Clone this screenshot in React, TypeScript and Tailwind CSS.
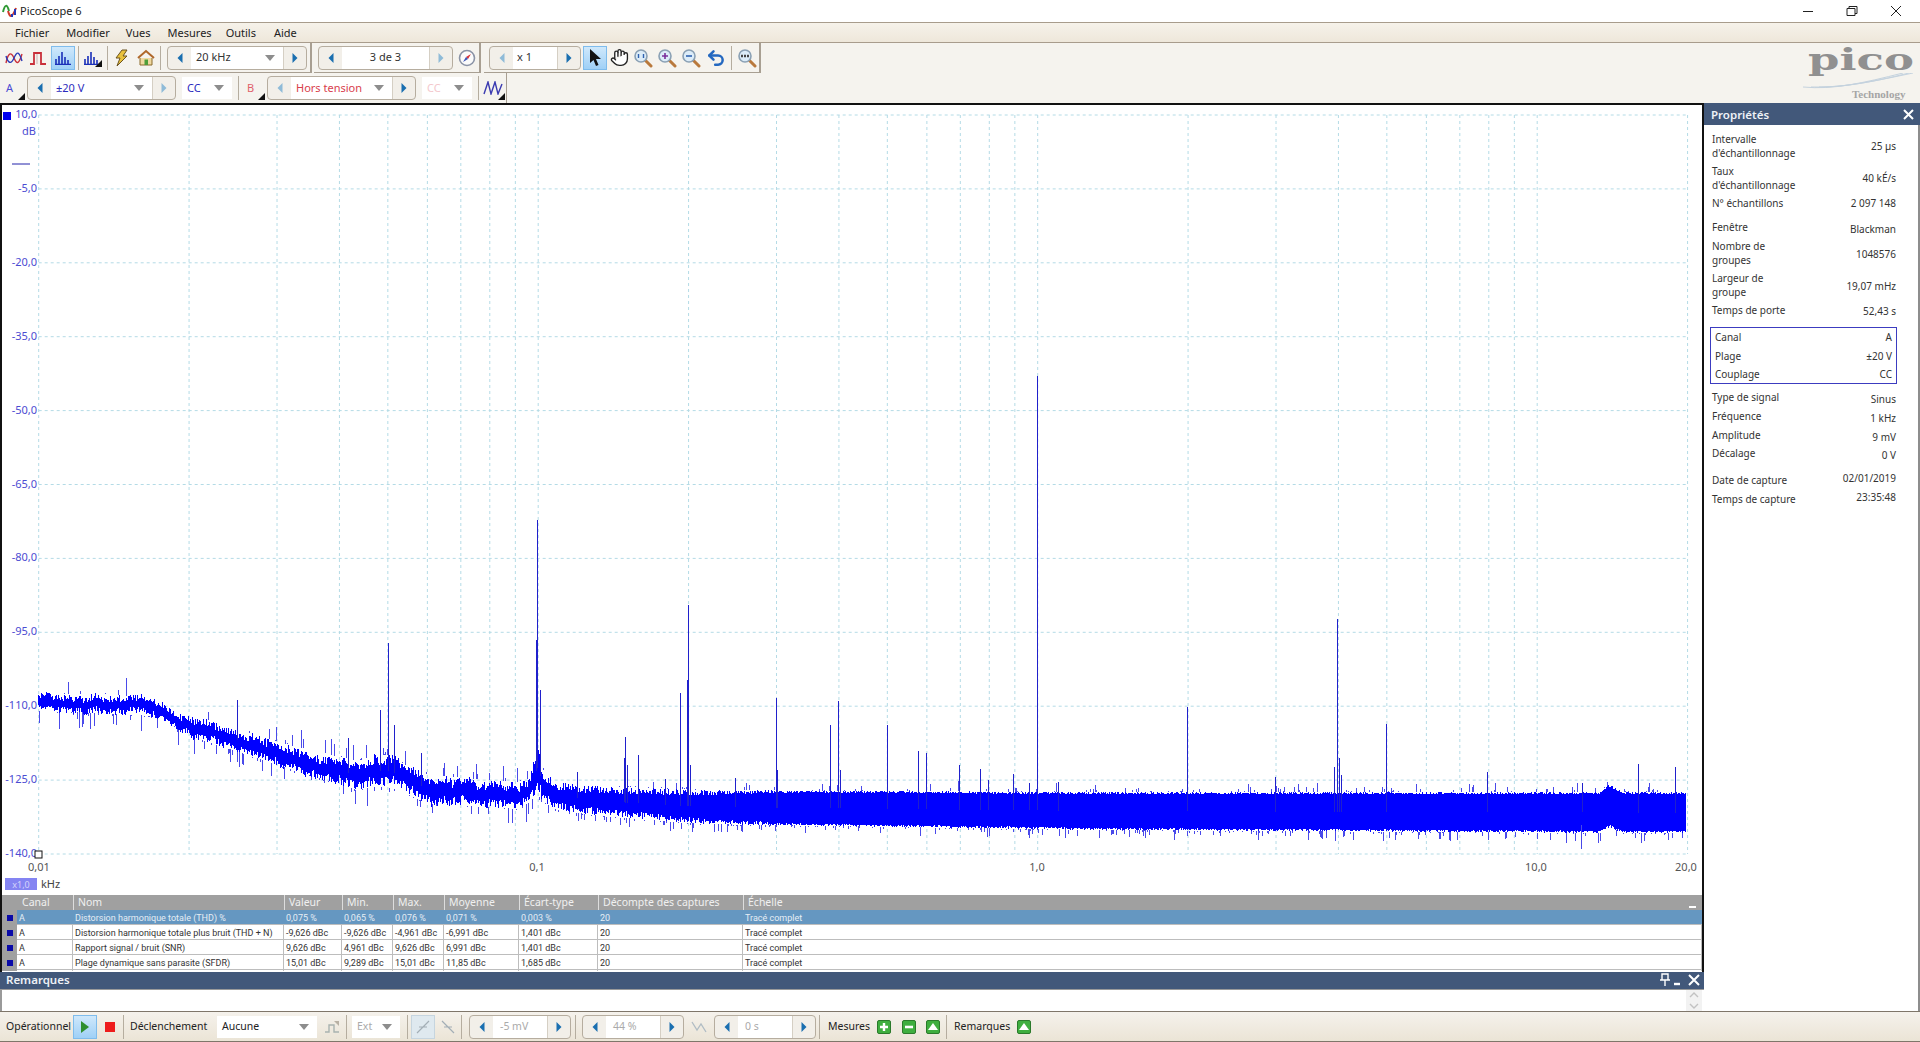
import type { ReactNode } from 'react'
import { Hand, Undo2 } from 'lucide-react'
import clsx from 'clsx'

// ---- spectrum data, seeded so the picture is the same each time
function mulberry(seed: number) {
  return () => {
    seed |= 0
    seed = (seed + 0x6d2b79f5) | 0
    let t = Math.imul(seed ^ (seed >>> 15), 1 | seed)
    t = (t + Math.imul(t ^ (t >>> 7), 61 | t)) ^ t
    return ((t ^ (t >>> 14)) >>> 0) / 4294967296
  }
}

const envelope: [number, number, number][] = [
  [38, 694, 711], [100, 694, 713], [150, 697, 716], [171, 705, 724], [200, 717, 739],
  [286, 744, 768], [357, 761, 790], [378, 755, 786], [392, 755, 788], [404, 764, 792],
  [428, 775, 804], [518, 782, 809], [530, 778, 802], [537, 742, 794], [544, 772, 802],
  [557, 782, 810], [600, 786, 816], [700, 790, 824], [900, 791, 827], [1100, 792, 830],
  [1600, 792, 833], [1610, 784, 827], [1622, 792, 833], [1686, 792, 833],
]

function envAt(x: number) {
  for (let i = 1; i < envelope.length; i++) {
    const [x1, t1, b1] = envelope[i]
    if (x <= x1) {
      const [x0, t0, b0] = envelope[i - 1]
      const k = (x - x0) / (x1 - x0)
      return [t0 + (t1 - t0) * k, b0 + (b1 - b0) * k]
    }
  }
  return [792, 833]
}

const rnd = mulberry(4711)
let core = ''
let fringe = ''
let wander = 0
for (let px = 38; px < 1686; px++) {
  const x = px + 0.5
  const [top, bot] = envAt(x)
  wander += (rnd() - 0.5) * 2.8
  wander *= 0.9
  // the band gets more solid with frequency
  const solid = x < 540 ? 0.35 : Math.min(0.88, 0.35 + ((x - 540) / 260) * 0.53)
  const mid = (top + bot) / 2 + (x < 540 ? wander : 0)
  const half = (bot - top) / 2
  const y1 = mid - half * (solid + (1 - solid) * rnd())
  const y2 = mid + half * (solid + (1 - solid) * rnd())
  core += `M${x} ${y1.toFixed(0)}V${y2.toFixed(0)}`
  if (rnd() < 0.3) {
    const up = rnd() < 0.35
    const d = 1 + Math.pow(rnd(), 2.5) * (x < 540 ? 17 : 9)
    fringe += up
      ? `M${x} ${top.toFixed(0)}V${(top - d).toFixed(0)}`
      : `M${x} ${bot.toFixed(0)}V${(bot + d).toFixed(0)}`
  }
}

const spikes: [number, number][] = [
  [237, 700], [348, 738], [380, 710], [388, 643], [394, 725], [421, 753], [537, 520], [536, 640], [540, 690],
  [577, 772], [625, 737], [624, 758], [627, 765], [638, 755], [665, 779], [680, 693], [688, 605], [687, 680],
  [690, 765], [735, 778], [776, 698], [777, 770], [830, 725], [838, 701], [840, 770], [887, 725], [918, 751],
  [926, 753], [959, 765], [980, 769], [988, 780], [1013, 774], [1029, 783], [1037, 376], [1058, 782],
  [1187, 707], [1275, 777], [1334, 767], [1337, 619], [1339, 758], [1341, 775], [1386, 724], [1487, 772],
  [1582, 783], [1638, 764], [1675, 767],
]

const xPos = (f: number) => 38.7 + (Math.log10(f) + 2) * 499.5
const freqs = [
  0.01, 0.02, 0.03, 0.04, 0.05, 0.06, 0.07, 0.08, 0.09, 0.1, 0.2, 0.3, 0.4, 0.5, 0.6, 0.7, 0.8, 0.9, 1, 2, 3, 4, 5, 6,
  7, 8, 9, 10, 20,
]
const levels = ['10,0', '-5,0', '-20,0', '-35,0', '-50,0', '-65,0', '-80,0', '-95,0', '-110,0', '-125,0', '-140,0']
const levelY = (i: number) => 115 + i * 73.9

function Chart() {
  return (
    <svg width="1700" height="790" viewBox="2 105 1700 790" className="block font-['Noto_Sans',sans-serif]">
      {levels.map((l, i) => (
        <line key={l} x1="38.7" x2="1686" y1={levelY(i)} y2={levelY(i)} stroke="#b4dbe6" strokeDasharray="3 3" />
      ))}
      {freqs.map((f) => (
        <line key={f} x1={xPos(f)} x2={xPos(f)} y1="115" y2="854" stroke="#b4dbe6" strokeDasharray="3 3" />
      ))}
      <path d={fringe} stroke="#4a4aea" strokeWidth="1" fill="none" shapeRendering="crispEdges" />
      <path d={core} stroke="#0000ff" strokeWidth="1" fill="none" shapeRendering="crispEdges" />
      {spikes.map(([x, y]) => {
        const [top, bot] = envAt(x)
        return (
          <line
            key={x}
            x1={x + 0.5}
            x2={x + 0.5}
            y1={y}
            y2={(top + bot) / 2}
            stroke="#2020cc"
            strokeWidth="1"
            shapeRendering="crispEdges"
          />
        )
      })}
      <line x1="1581.5" x2="1581.5" y1="825" y2="849" stroke="#4848e8" shapeRendering="crispEdges" />
      <rect x="3" y="112" width="8" height="8" fill="#0000f0" />
      <line x1="12" x2="30" y1="164" y2="164" stroke="#2222aa" />
      {levels.map((l, i) => (
        <text key={l} x="37" y={levelY(i) + 3} textAnchor="end" fontSize="11" fill="#4c4cd2">
          {l}
        </text>
      ))}
      <text x="36" y="135" textAnchor="end" fontSize="11" fill="#4c4cd2">
        dB
      </text>
      <rect x="35" y="851" width="7" height="7" fill="#fff" stroke="#111" />
      {[
        ['0,01', 39],
        ['0,1', 537],
        ['1,0', 1037],
        ['10,0', 1536],
        ['20,0', 1686],
      ].map(([t, x]) => (
        <text key={t} x={x} y="871" textAnchor="middle" fontSize="11" fill="#555">
          {t}
        </text>
      ))}
      <rect x="5" y="878" width="32" height="12" fill="#8484f2" />
      <text x="21" y="888" textAnchor="middle" fontSize="9" fill="#d4d4fb">
        x1,0
      </text>
      <text x="41" y="888" fontSize="11" fill="#444">
        kHz
      </text>
    </svg>
  )
}

// ---- small toolbar parts
function Tri({ dir = 'right', off }: { dir?: 'left' | 'right'; off?: boolean }) {
  return (
    <svg width="6" height="10" viewBox="0 0 6 10">
      <polygon
        points={dir === 'right' ? '0.5,0 5.5,5 0.5,10' : '5.5,0 0.5,5 5.5,10'}
        fill={off ? '#8fbbd8' : '#1a6fb0'}
      />
    </svg>
  )
}

function Stepper({ mid, children, leftOff, rightOff, className }: {
  mid: string
  children?: ReactNode
  leftOff?: boolean
  rightOff?: boolean
  className?: string
}) {
  return (
    <div className={clsx('flex h-[24px] flex-none rounded-[4px] border border-[#b6ad9f] bg-[#f2efe9]', className)}>
      <div className="flex w-[23px] items-center justify-center">
        <Tri dir="left" off={leftOff} />
      </div>
      <div className={clsx('flex items-center bg-white', mid)}>{children}</div>
      <div className="flex w-[23px] items-center justify-center border-l border-[#d5cfc4]">
        <Tri off={rightOff} />
      </div>
    </div>
  )
}

function DropTri() {
  return (
    <svg width="10" height="6" viewBox="0 0 10 6" className="flex-none">
      <polygon points="0,0 10,0 5,6" fill="#8d8d8d" />
    </svg>
  )
}

function Select({ w, label, labelClass }: { w: string; label: string; labelClass?: string }) {
  return (
    <div className={clsx('flex h-[22px] flex-none items-center justify-between bg-white pl-[5px] pr-[8px]', w)}>
      <span className={labelClass}>{label}</span>
      <DropTri />
    </div>
  )
}

function Btn({ active, className, children }: { active?: boolean; className?: string; children?: ReactNode }) {
  return (
    <div
      className={clsx(
        'flex h-[24px] w-[24px] flex-none items-center justify-center',
        active && 'border border-[#7fbcec] bg-gradient-to-b from-[#cfe8fb] to-[#9fd0f6]',
        className,
      )}
    >
      {children}
    </div>
  )
}

const Sep = ({ className }: { className?: string }) => (
  <div className={clsx('h-[24px] w-px flex-none bg-[#b5ad9f]', className)} />
)

const Corner = () => (
  <svg width="7" height="7" viewBox="0 0 7 7" className="absolute bottom-[3px] right-[2px]">
    <polygon points="7,0 7,7 0,7" fill="#111" />
  </svg>
)

function Spectrum({ className }: { className?: string }) {
  return (
    <svg width="16" height="14" viewBox="0 0 16 14" className={className}>
      <path d="M1 13V8M4 13V5M7 13V1M10 13V6M13 13V9M0 13.5H16" stroke="#1a2fb8" strokeWidth="1.6" fill="none" />
    </svg>
  )
}

function Lens({ children }: { children?: ReactNode }) {
  return (
    <svg width="20" height="20" viewBox="0 0 20 20">
      <line x1="12" y1="12" x2="18" y2="18" stroke="#b9793c" strokeWidth="3" strokeLinecap="round" />
      <circle cx="8" cy="8" r="6" fill="#dcecf8" stroke="#8aa0b4" strokeWidth="1.6" />
      {children}
    </svg>
  )
}

function GreenBtn({ glyph, className }: { glyph: 'plus' | 'minus' | 'up'; className?: string }) {
  return (
    <svg width="14" height="14" viewBox="0 0 14 14" className={clsx('flex-none', className)}>
      <rect x="0.5" y="0.5" width="13" height="13" rx="1.5" fill="#3fae3f" stroke="#2b7a2b" />
      {glyph === 'plus' && <path d="M7 3V11M3 7H11" stroke="#fff" strokeWidth="2.4" />}
      {glyph === 'minus' && <path d="M3 7H11" stroke="#fff" strokeWidth="2.6" />}
      {glyph === 'up' && <polygon points="7,3 12,10 2,10" fill="#fff" />}
    </svg>
  )
}

// ---- table and properties data
const rows = [
  ['A', 'Distorsion harmonique totale (THD) %', '0,075 %', '0,065 %', '0,076 %', '0,071 %', '0,003 %', '20', 'Tracé complet'],
  ['A', 'Distorsion harmonique totale plus bruit (THD + N)', '-9,626 dBc', '-9,626 dBc', '-4,961 dBc', '-6,991 dBc', '1,401 dBc', '20', 'Tracé complet'],
  ['A', 'Rapport signal / bruit (SNR)', '9,626 dBc', '4,961 dBc', '9,626 dBc', '6,991 dBc', '1,401 dBc', '20', 'Tracé complet'],
  ['A', 'Plage dynamique sans parasite (SFDR)', '15,01 dBc', '9,289 dBc', '15,01 dBc', '11,85 dBc', '1,685 dBc', '20', 'Tracé complet'],
]
const heads = ['Canal', 'Nom', 'Valeur', 'Min.', 'Max.', 'Moyenne', 'Écart-type', 'Décompte des captures', 'Échelle']
const cols = 'grid grid-cols-[15px_56px_211px_58px_51px_51px_75px_79px_145px_1fr]'

function Prop({ label, value, tall, className, valueClass }: {
  label: ReactNode
  value: string
  tall?: boolean
  className?: string
  valueClass?: string
}) {
  return (
    <div className={clsx('flex items-center justify-between', tall ? 'h-[28px]' : 'h-[14px]', className)}>
      <div>{label}</div>
      <div className={valueClass}>{value}</div>
    </div>
  )
}

export default function App() {
  return (
    <div className="flex h-[1042px] w-[1920px] flex-col overflow-hidden bg-white font-['Noto_Sans',sans-serif] text-[10px] text-[#333]">
      {/* title bar */}
      <div className="flex h-[22px] flex-none items-center justify-between bg-white">
        <div className="flex items-center">
          <svg width="16" height="16" viewBox="0 0 16 16" className="ml-[2px]">
            <path d="M1 9C3 1 5 1 7 8" stroke="#2f9a34" strokeWidth="2" fill="none" />
            <path d="M6 8C8 15 10 15 14 5" stroke="#d0392b" strokeWidth="2" fill="none" />
            <path d="M10 11V14M13 6V12" stroke="#2438b8" strokeWidth="2" />
          </svg>
          <span className="ml-[2px] text-[11px] text-[#222]">PicoScope 6</span>
        </div>
        <svg width="121" height="16" viewBox="0 0 121 16">
          <path d="M4 8.5H14" stroke="#222" fill="none" />
          <path d="M48 5.5H56V12.5H48ZM50 5.5V3.5H58V10.5H56" stroke="#222" fill="none" />
          <path d="M92 3L102 13M102 3L92 13" stroke="#222" fill="none" />
        </svg>
      </div>

      {/* menu */}
      <div className="flex h-[21px] flex-none items-center border-y border-[#a89c8c] bg-gradient-to-b from-[#f6f2ea] to-[#eee7da] pt-px text-[11px] text-[#222]">
        <span className="ml-[15px]">Fichier</span>
        <span className="ml-[17px]">Modifier</span>
        <span className="ml-[16px]">Vues</span>
        <span className="ml-[17px]">Mesures</span>
        <span className="ml-[14px]">Outils</span>
        <span className="ml-[18px]">Aide</span>
      </div>

      {/* toolbars with logo */}
      <div className="flex h-[60px] flex-none justify-between bg-[#f5f3ee] text-[11px]">
        <div className="flex flex-col">
          <div className="flex h-[30px] items-center">
            <div className="flex h-[30px] w-[312px] flex-none items-center border-b border-r-2 border-[#a89f92] pl-[2px]">
              <Btn>
                <svg width="18" height="14" viewBox="0 0 18 14">
                  <path d="M1 12C3 2 6 0 9 7S14 13 17 3" stroke="#c9303a" strokeWidth="1.4" fill="none" />
                  <path d="M1 5C3 12 6 14 9 7S14 0 17 10" stroke="#2a3cb8" strokeWidth="1.4" fill="none" />
                </svg>
              </Btn>
              <Btn>
                <svg width="16" height="14" viewBox="0 0 16 14">
                  <path d="M0 13H4V2H11V13H16" stroke="#c9303a" strokeWidth="1.8" fill="none" />
                  <path d="M7 3V13" stroke="#c9b0b0" strokeWidth="1" />
                </svg>
              </Btn>
              <Btn active className="ml-px">
                <Spectrum />
              </Btn>
              <Sep className="ml-[3px]" />
              <Btn className="relative ml-px">
                <Spectrum />
                <Corner />
              </Btn>
              <Sep className="ml-[3px]" />
              <Btn className="ml-px">
                <svg width="16" height="18" viewBox="0 0 16 18">
                  <polygon points="9,1 14,1 10,7 14,7 4,17 7,9 3,9" fill="#e9c23d" stroke="#6b5320" strokeWidth="1" />
                </svg>
              </Btn>
              <Btn className="ml-px">
                <svg width="18" height="18" viewBox="0 0 18 18">
                  <path d="M3 9V16H15V9" fill="#f0d9a0" stroke="#8a6a2c" />
                  <path d="M1 9L9 2L17 9" stroke="#b0682a" strokeWidth="2" fill="none" />
                  <rect x="7.5" y="10.5" width="3.5" height="5.5" fill="#4f9e3a" />
                </svg>
              </Btn>
              <Sep className="ml-[2px]" />
              <Stepper mid="w-[92px] pl-[5px]" className="ml-[6px]">
                <span>20 kHz</span>
                <span className="ml-auto mr-[8px]">
                  <DropTri />
                </span>
              </Stepper>
            </div>
            <div className="ml-[2px] flex h-[30px] w-[167px] flex-none items-center border-b border-r-2 border-[#a89f92] pl-[4px]">
              <Stepper mid="w-[87px] justify-center" rightOff>
                <span>3 de 3</span>
              </Stepper>
              <Btn className="ml-[2px]">
                <svg width="18" height="18" viewBox="0 0 18 18">
                  <circle cx="9" cy="9" r="7.5" fill="#fbfbfb" stroke="#8a93a6" strokeWidth="1.6" />
                  <polygon points="13,5 10,10 8,8" fill="#d8323a" />
                  <polygon points="5,13 8,8 10,10" fill="#3b55b8" />
                </svg>
              </Btn>
            </div>
            <div className="ml-[3px] flex h-[30px] w-[277px] flex-none items-center border-b border-r-2 border-[#a89f92] pl-[5px]">
              <Stepper mid="w-[44px] pl-[4px]" leftOff>
                <span>x 1</span>
              </Stepper>
              <Btn active className="ml-[2px]">
                <svg width="13" height="18" viewBox="0 0 13 18">
                  <polygon points="1,0 1,14 4.5,11 7,17 9.5,16 7,10 12,10" fill="#111" />
                </svg>
              </Btn>
              <Btn>
                <Hand size={19} strokeWidth={1.7} color="#222" fill="#fff" />
              </Btn>
              <Btn>
                <Lens>
                  <path d="M5.5 6V10M10.5 6V10" stroke="#2e62b0" strokeWidth="1.4" />
                </Lens>
              </Btn>
              <Btn>
                <Lens>
                  <path d="M8 5V11M5 8H11" stroke="#7a2f9a" strokeWidth="1.6" />
                </Lens>
              </Btn>
              <Btn>
                <Lens>
                  <path d="M5 8H11" stroke="#2e62b0" strokeWidth="1.6" />
                </Lens>
              </Btn>
              <Btn className="ml-px">
                <Undo2 size={20} strokeWidth={3} color="#2468c0" />
              </Btn>
              <Sep className="ml-[3px]" />
              <Btn className="ml-[3px]">
                <Lens>
                  <path d="M4 8H12" stroke="#444" strokeWidth="2.4" strokeDasharray="2 1" />
                </Lens>
              </Btn>
            </div>
          </div>
          <div className="flex h-[30px] w-[507px] items-center border-r border-[#a89f92]">
            <div className="relative flex h-[30px] w-[27px] flex-none items-center pl-[6px] text-[#4c4cd2]">
              A
              <Corner />
            </div>
            <Stepper mid="w-[101px] pl-[5px] text-[#2b2bbd]" rightOff>
              <span>±20 V</span>
              <span className="ml-auto mr-[8px]">
                <DropTri />
              </span>
            </Stepper>
            <Select w="ml-[6px] w-[50px]" label="CC" labelClass="text-[#2b2bbd]" />
            <Sep className="ml-[6px]" />
            <div className="relative flex h-[30px] w-[28px] flex-none items-center pl-[8px] text-[#e0606a]">
              B
              <Corner />
            </div>
            <Stepper mid="w-[101px] pl-[5px] text-[#d8404c]" leftOff>
              <span>Hors tension</span>
              <span className="ml-auto mr-[8px]">
                <DropTri />
              </span>
            </Stepper>
            <Select w="ml-[6px] w-[50px]" label="CC" labelClass="text-[#f4c8cc]" />
            <Sep className="ml-[6px]" />
            <div className="relative flex h-[30px] w-[28px] flex-none items-center justify-center">
              <svg width="20" height="14" viewBox="0 0 20 14">
                <path d="M1 13L5 1L8 13L12 1L15 13L19 3" stroke="#3a3ab0" strokeWidth="1.4" fill="none" />
              </svg>
              <Corner />
            </div>
          </div>
        </div>
        <div className="relative mr-[5px] h-[60px] w-[112px] pl-[5px]">
          <div className="mt-[2px] origin-left scale-x-[1.55] font-['DejaVu_Serif',serif] text-[29px] font-bold leading-[30px] text-[#909090]">
            pico
          </div>
          <svg width="112" height="16" viewBox="0 0 112 16" className="absolute left-0 top-[30px]">
            <path d="M0 14C30 17 60 10 100 0M8 14C36 15 66 10 106 0M16 14C44 14 72 8 110 0" stroke="#c4d2de" fill="none" />
          </svg>
          <div className="absolute bottom-[3px] left-[49px] font-['Liberation_Serif',serif] text-[11px] font-bold leading-[12px] text-[#a5a5a5]">
            Technology
          </div>
        </div>
      </div>

      {/* main area */}
      <div className="flex min-h-0 flex-1">
        <div className="flex w-[1704px] flex-none flex-col">
          <div className="flex-none border-l-2 border-r-2 border-t-2 border-[#111]">
            <Chart />
            <div className="bg-white font-['Roboto',sans-serif] text-[9px] leading-[16px]">
              <div className={clsx(cols, "h-[15px] bg-[#a0a0a0] font-['Noto_Sans',sans-serif] text-[10.5px] leading-[15px] text-[#f0f0f0]")}>
                <div />
                {heads.map((h) => (
                  <div
                    key={h}
                    className={clsx(
                      h === 'Canal' ? 'pl-[5px]' : 'border-l border-[#ddd] pl-[4px]',
                      h === 'Échelle' && 'flex items-end justify-between pr-[6px]',
                    )}
                  >
                    {h}
                    {h === 'Échelle' && <span className="mb-[2px] h-[2px] w-[7px] bg-white" />}
                  </div>
                ))}
              </div>
              {rows.map((r, i) => (
                <div
                  key={r[1]}
                  className={clsx(
                    cols,
                    'h-[15px] border-b border-[#bdbdbd]',
                    i === 0 ? 'bg-[#6597c1] text-[#e6eef5]' : 'text-[#333]',
                  )}
                >
                  <div className="flex items-center justify-center bg-[#a0a0a0]">
                    <span className="h-[6px] w-[6px] bg-[#0a0aa8]" />
                  </div>
                  {r.map((c, j) => (
                    <div key={j} className={clsx('whitespace-nowrap pl-[2px]', i > 0 && 'border-r border-[#bdbdbd]')}>
                      {c}
                    </div>
                  ))}
                </div>
              ))}
            </div>
            <div className="h-[2px]" />
          </div>
          <div className="flex h-[17px] flex-none items-center justify-between bg-[#42587a] pb-px pl-[6px] pr-[2px] text-[11.5px] font-semibold text-[#eef1f6]">
            <span>Remarques</span>
            <svg width="44" height="14" viewBox="0 0 44 14">
              <path d="M4 1H10V7H4ZM2 7H12M7 7V13" stroke="#fff" strokeWidth="1.4" fill="none" />
              <path d="M16 11H22" stroke="#fff" strokeWidth="2.4" />
              <path d="M31 2L41 12M41 2L31 12" stroke="#fff" strokeWidth="2" />
            </svg>
          </div>
          <div className="flex min-h-0 flex-1 justify-end border-l-2 border-t border-[#9a9a9a] bg-white pr-[2px]">
            <div className="flex w-[16px] flex-col items-center justify-between bg-[#f2f2f2]">
              <svg width="12" height="10" viewBox="0 0 12 10">
                <path d="M2 7L6 3L10 7" stroke="#c2c2c2" strokeWidth="1.4" fill="none" />
              </svg>
              <svg width="12" height="10" viewBox="0 0 12 10">
                <path d="M2 3L6 7L10 3" stroke="#c2c2c2" strokeWidth="1.4" fill="none" />
              </svg>
            </div>
          </div>
        </div>

        {/* properties */}
        <div className="flex w-[216px] flex-none flex-col">
          <div className="flex h-[22px] flex-none items-center justify-between bg-[#42587a] pl-[7px] pr-[6px] pt-px text-[11.5px] font-semibold text-[#eef1f6]">
            <span>Propriétés</span>
            <svg width="11" height="11" viewBox="0 0 11 11">
              <path d="M1 1L10 10M10 1L1 10" stroke="#fff" strokeWidth="2" />
            </svg>
          </div>
          <div className="min-h-0 flex-1 border-r-2 border-[#8d8d8d] pl-[8px] pr-[22px] pt-[7px] leading-[14px]">
            <Prop tall label={<>Intervalle<br />d'échantillonnage</>} value="25 µs" />
            <Prop tall label={<>Taux<br />d'échantillonnage</>} value="40 kÉ/s" className="mt-[4px]" />
            <Prop label="N° échantillons" value="2 097 148" className="mt-[4px]" />
            <Prop label="Fenêtre" value="Blackman" className="mt-[10px]" valueClass="mt-[4px]" />
            <Prop tall label={<>Nombre de<br />groupes</>} value="1048576" className="mt-[5px]" valueClass="mt-[2px]" />
            <Prop tall label={<>Largeur de<br />groupe</>} value="19,07 mHz" className="mt-[4px]" valueClass="mt-[2px]" />
            <Prop label="Temps de porte" value="52,43 s" className="mt-[4px]" valueClass="mt-[2px]" />
            <div className="-ml-[2px] -mr-[1px] mt-[10px] h-[57px] border border-[#3c3cc0] px-[4px]">
              <Prop label="Canal" value="A" className="h-[18px]" />
              <Prop label="Plage" value="±20 V" className="mt-[1px] h-[18px]" />
              <Prop label="Couplage" value="CC" className="h-[18px]" />
            </div>
            <Prop label="Type de signal" value="Sinus" className="mt-[6px]" valueClass="mt-[4px]" />
            <Prop label="Fréquence" value="1 kHz" className="mt-[5px]" valueClass="mt-[4px]" />
            <Prop label="Amplitude" value="9 mV" className="mt-[5px]" valueClass="mt-[4px]" />
            <Prop label="Décalage" value="0 V" className="mt-[4px]" valueClass="mt-[4px]" />
            <Prop label="Date de capture" value="02/01/2019" className="mt-[13px]" valueClass="mb-[4px]" />
            <Prop label="Temps de capture" value="23:35:48" className="mt-[5px]" valueClass="mb-[4px]" />
          </div>
        </div>
      </div>

      {/* bottom toolbar */}
      <div className="flex h-[31px] flex-none items-center border-y border-[#7f766a] bg-gradient-to-b from-[#f5f2ec] to-[#ebe4d6] pl-[6px] text-[10.5px] text-[#222]">
        <span className="w-[67px] flex-none">Opérationnel</span>
        <Btn active>
          <svg width="10" height="14" viewBox="0 0 10 14">
            <polygon points="1,1 9,7 1,13" fill="#2f8f2f" />
          </svg>
        </Btn>
        <div className="flex w-[26px] flex-none justify-center">
          <div className="h-[10px] w-[10px] bg-[#ee1c1c]" />
        </div>
        <Sep />
        <span className="ml-[6px] w-[78px] flex-none">Déclenchement</span>
        <Select w="ml-[9px] w-[100px]" label="Aucune" />
        <div className="flex w-[29px] flex-none justify-center">
          <svg width="16" height="14" viewBox="0 0 16 14">
            <path d="M1 12H5V5H10V12H15" stroke="#a9b3b0" strokeWidth="1.4" fill="none" />
            <path d="M10 1L15 1L15 6Z" fill="#b9b1a4" />
          </svg>
        </div>
        <Sep />
        <Select w="ml-[5px] w-[48px] text-[#aaa]" label="Ext" />
        <Sep className="ml-[7px]" />
        <Btn className="ml-[3px] border border-[#c6d5df] bg-[#dfe9ef]">
          <svg width="14" height="14" viewBox="0 0 14 14">
            <path d="M1 13L13 1M3 7H11" stroke="#a3aeb6" strokeWidth="1.2" />
          </svg>
        </Btn>
        <div className="flex w-[26px] flex-none justify-center">
          <svg width="14" height="14" viewBox="0 0 14 14">
            <path d="M1 1L13 13M3 7H11" stroke="#a3aeb6" strokeWidth="1.2" />
          </svg>
        </div>
        <Sep />
        <Stepper mid="w-[54px] pl-[7px] text-[#aaa]" className="ml-[7px]">
          <span>-5 mV</span>
        </Stepper>
        <Sep className="ml-[4px]" />
        <Stepper mid="w-[54px] pl-[7px] text-[#aaa]" className="ml-[6px]">
          <span>44 %</span>
        </Stepper>
        <div className="flex w-[30px] flex-none justify-center">
          <svg width="16" height="14" viewBox="0 0 16 14">
            <path d="M1 2L6 10L10 4L15 12" stroke="#b0bcc4" strokeWidth="1.3" fill="none" />
          </svg>
        </div>
        <Stepper mid="w-[54px] pl-[7px] text-[#aaa]">
          <span>0 s</span>
        </Stepper>
        <Sep className="ml-[3px]" />
        <span className="ml-[8px] w-[44px] flex-none">Mesures</span>
        <GreenBtn glyph="plus" className="ml-[5px]" />
        <GreenBtn glyph="minus" className="ml-[11px]" />
        <GreenBtn glyph="up" className="ml-[10px]" />
        <Sep className="ml-[6px]" />
        <span className="ml-[7px] w-[56px] flex-none">Remarques</span>
        <GreenBtn glyph="up" className="ml-[7px]" />
      </div>
    </div>
  )
}
